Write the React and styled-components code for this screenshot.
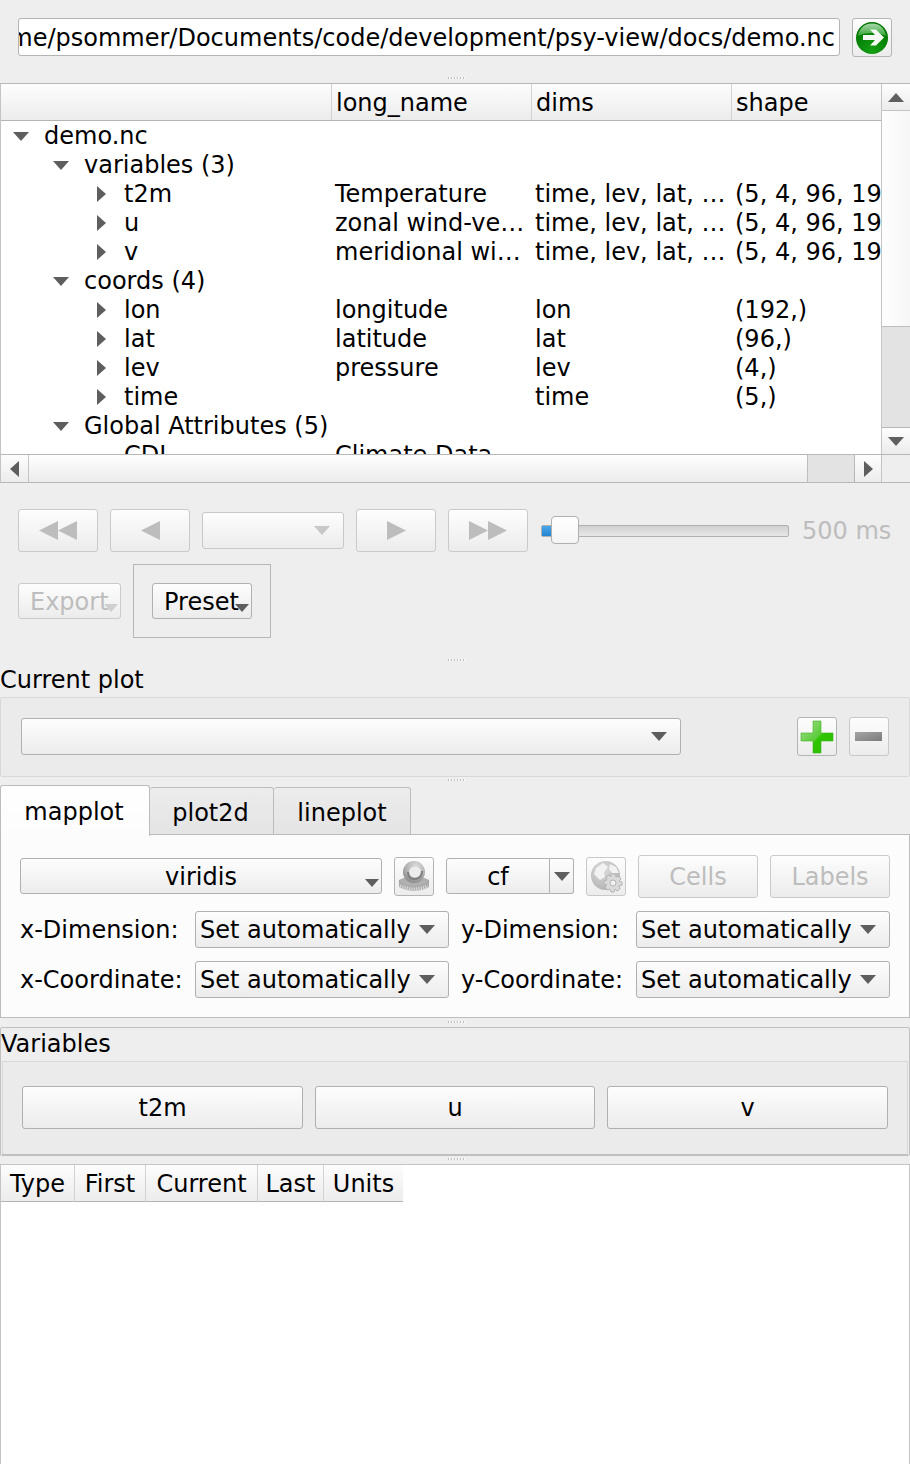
import React from 'react';
import styled, { createGlobalStyle } from 'styled-components';

const Global = createGlobalStyle`
  html, body { margin: 0; padding: 0; background: #eeeeee; }
  body { font-family: "DejaVu Sans", "Liberation Sans", sans-serif; font-size: 24px; color: #000; }
  * { box-sizing: border-box; }
`;

const Window = styled.div`
  width: 910px;
  height: 1464px;
  overflow: hidden;
  background: #eeeeee;
`;

const gradient = 'linear-gradient(#fdfdfd, #ececec)';

const TopBar = styled.div`
  display: flex;
  gap: 12px;
  padding: 18px 18px 0;
  height: 72px;
`;

const PathInput = styled.div`
  width: 822px;
  height: 38px;
  background: #fff;
  border: 1px solid #b4b4b4;
  border-radius: 3px;
  padding: 2px 4px 0;
  display: flex;
  justify-content: flex-end;
  align-items: center;
  overflow: hidden;
  white-space: nowrap;
  line-height: 34px;
`;

const IconButton = styled.div`
  width: 40px;
  height: 39px;
  border: 1px solid ${p => (p.$disabled ? '#c8c8c8' : '#b4b4b4')};
  border-radius: 3px;
  background: ${gradient};
  display: flex;
  align-items: center;
  justify-content: center;
  flex: none;
`;

const Handle = styled.div`
  height: ${p => p.$h}px;
  padding: ${p => p.$top}px 0 0 2px;
  display: flex;
  align-items: flex-start;
  justify-content: center;
  &::before {
    content: '';
    width: 17px;
    height: 2px;
    background: repeating-linear-gradient(90deg, #c0c0c0 0 1px, #fafafa 1px 2px, transparent 2px 3px);
  }
`;

const TreeFrame = styled.div`
  height: 400px;
  border: 1px solid #b8b8b8;
  border-left-color: #c4c4c4;
  border-right: none;
  display: grid;
  grid-template-columns: 880px 29px;
  grid-template-rows: 370px 28px;
  background: #fff;
`;

const TreeMain = styled.div`
  overflow: hidden;
  display: flex;
  flex-direction: column;
`;

const TreeHeader = styled.div`
  display: flex;
  height: 37px;
  flex: none;
  background: ${gradient};
  border-bottom: 1px solid #b4b4b4;
`;

const HeaderCell = styled.div`
  width: ${p => p.$w}px;
  flex: none;
  border-left: ${p => (p.$first ? 'none' : '1px solid #d2d2d2')};
  padding-left: 4px;
  line-height: 39px;
  white-space: nowrap;
`;

const TreeBody = styled.div`
  flex: 1;
  overflow: hidden;
`;

const TreeRow = styled.div`
  display: grid;
  grid-template-columns: 330px 200px 200px 150px;
  height: 29px;
  line-height: 29px;
  white-space: nowrap;
`;

const NameCell = styled.div`
  display: flex;
  align-items: center;
  padding-left: ${p => p.$level * 40}px;
  white-space: nowrap;
`;

const NameText = styled.span`
  padding-top: 1px;
`;

const ArrowSlot = styled.span`
  width: 43px;
  flex: none;
  display: flex;
  align-items: center;
  padding-left: ${p => (p.$open ? 12 : 16)}px;
`;

const DataCell = styled.div`
  padding: 1px 0 0 4px;
  overflow: hidden;
`;

const VBar = styled.div`
  border-left: 1px solid #c4c4c4;
  display: flex;
  flex-direction: column;
  height: 370px;
  background: #fff;
`;

const BarButton = styled.div`
  height: ${p => p.$h}px;
  flex: none;
  background: ${gradient};
  display: flex;
  align-items: center;
  justify-content: center;
  ${p => (p.$top ? 'border-bottom: 1px solid #c4c4c4;' : '')}
  ${p => (p.$bottom ? 'border-top: 1px solid #b8b8b8;' : '')}
`;

const BarPage = styled.div`
  height: ${p => p.$h}px;
  flex: none;
  background: linear-gradient(90deg, #fefefe, #f6f6f6);
`;

const BarGroove = styled.div`
  flex: 1;
  background: #e3e3e3;
  border-top: 1px solid #bdbdbd;
`;

const HBar = styled.div`
  border-top: 1px solid #b8b8b8;
  display: flex;
  height: 28px;
`;

const HBarButton = styled.div`
  width: ${p => p.$w}px;
  flex: none;
  background: ${gradient};
  display: flex;
  align-items: center;
  justify-content: center;
  ${p => (p.$left ? 'border-right: 1px solid #c4c4c4;' : '')}
  ${p => (p.$right ? 'border-left: 1px solid #b8b8b8;' : '')}
`;

const HBarPage = styled.div`
  width: ${p => p.$w}px;
  flex: none;
  background: linear-gradient(#fefefe, #ececec);
`;

const HBarGroove = styled.div`
  flex: 1;
  background: #e3e3e3;
  border-left: 1px solid #bdbdbd;
`;

const Corner = styled.div`
  background: #eeeeee;
  border-top: 1px solid #b8b8b8;
  border-left: 1px solid #c4c4c4;
`;

const Controls = styled.div`
  height: 170px;
  padding: 26px 18px 0;
`;

const PlayRow = styled.div`
  display: flex;
  align-items: center;
  gap: 12px;
  height: 43px;
`;

const PlayButton = styled.div`
  width: 80px;
  height: 43px;
  flex: none;
  border: 1px solid #cacaca;
  border-radius: 3px;
  background: ${gradient};
  display: flex;
  align-items: center;
  justify-content: center;
`;

const FrameCombo = styled.div`
  width: 142px;
  height: 37px;
  flex: none;
  border: 1px solid #c8c8c8;
  border-radius: 3px;
  background: ${gradient};
  display: flex;
  align-items: center;
  justify-content: flex-end;
  padding-right: 13px;
`;

const Slider = styled.div`
  position: relative;
  width: 248px;
  height: 12px;
  flex: none;
  margin-left: 1px;
  border: 1px solid #b0b0b0;
  border-radius: 2px;
  background: linear-gradient(#d0d0d0, #e8e8e8);
`;

const SliderFill = styled.div`
  position: absolute;
  left: 0;
  top: 0;
  bottom: 0;
  width: 14px;
  background: linear-gradient(#4aa6ea, #2283d0);
`;

const SliderKnob = styled.div`
  position: absolute;
  left: 9px;
  top: -10px;
  width: 28px;
  height: 28px;
  border: 1px solid #b0b0b0;
  border-radius: 4px;
  background: linear-gradient(#ffffff, #f4f4f4);
`;

const Interval = styled.div`
  color: #bdbdbd;
  margin-left: 1px;
  white-space: nowrap;
`;

const ExportRow = styled.div`
  display: flex;
  align-items: flex-start;
  gap: 12px;
  margin-top: 12px;
`;

const MenuButton = styled.div`
  position: relative;
  width: ${p => p.$w}px;
  height: 36px;
  margin-top: ${p => p.$top || 0}px;
  border: 1px solid ${p => (p.$disabled ? '#cacaca' : '#b0b0b0')};
  border-radius: 3px;
  background: ${gradient};
  color: ${p => (p.$disabled ? '#bdbdbd' : '#000')};
  line-height: 37px;
  padding-left: 11px;
  white-space: nowrap;
  flex: none;
`;

const MenuArrow = styled.span`
  position: absolute;
  right: 2px;
  bottom: 6px;
  display: flex;
`;

const PresetBox = styled.div`
  width: 138px;
  height: 74px;
  border: 1px solid #b8b8b8;
  padding: 18px;
`;

const SectionLabel = styled.div`
  height: 32px;
  line-height: 30px;
  white-space: nowrap;
`;

const PlotGroup = styled.div`
  height: 80px;
  border: 1px solid #d8d8d8;
  border-radius: 2px;
  background: #ebebeb;
  padding: 20px 20px 0;
  display: flex;
  align-items: flex-start;
`;

const PlotCombo = styled.div`
  width: 660px;
  height: 37px;
  flex: none;
  border: 1px solid #b0b0b0;
  border-radius: 3px;
  background: ${gradient};
  display: flex;
  align-items: center;
  justify-content: flex-end;
  padding-right: 13px;
`;

const PlotButtons = styled.div`
  display: flex;
  gap: 12px;
  margin-left: 116px;
  margin-top: -1px;
`;

const TabBar = styled.div`
  display: flex;
  align-items: flex-end;
  height: 50px;
  position: relative;
  z-index: 1;
`;

const Tab = styled.div`
  width: ${p => p.$w}px;
  height: ${p => (p.$active ? 51 : 48)}px;
  margin-bottom: ${p => (p.$active ? -1 : 0)}px;
  border: 1px solid #bcbcbc;
  border-left-width: ${p => (p.$active || p.$first ? 1 : 0)}px;
  border-bottom: ${p => (p.$active ? 'none' : '1px solid #bcbcbc')};
  border-radius: 3px 3px 0 0;
  background: ${p => (p.$active ? 'linear-gradient(#ffffff, #fcfcfc)' : 'linear-gradient(#ececec, #e4e4e4)')};
  text-align: center;
  line-height: ${p => (p.$active ? 52 : 50)}px;
  padding-right: ${p => p.$pad || 0}px;
`;

const TabPane = styled.div`
  height: 184px;
  margin-top: -1px;
  border: 1px solid #bcbcbc;
  background: #fcfcfc;
  padding: 20px 19px 0;
`;

const FormatRow = styled.div`
  display: flex;
  align-items: flex-start;
  height: 43px;
`;

const FormatCombo = styled.div`
  position: relative;
  width: ${p => p.$w}px;
  height: 36px;
  flex: none;
  margin: 3px 0 0 ${p => p.$gap || 0}px;
  border: 1px solid #b0b0b0;
  border-radius: ${p => p.$radius || '3px'};
  background: ${gradient};
  line-height: 36px;
  text-align: center;
`;

const ComboDrop = styled.div`
  width: 24px;
  height: 36px;
  flex: none;
  margin-top: 3px;
  border: 1px solid #b0b0b0;
  border-left: none;
  border-radius: 0 3px 3px 0;
  background: ${gradient};
  display: flex;
  align-items: center;
  justify-content: center;
`;

const SmallButton = styled(IconButton)`
  margin: 2px 0 0 ${p => p.$gap}px;
`;

const TextButton = styled.div`
  width: 120px;
  height: 43px;
  margin-left: 12px;
  border: 1px solid #cacaca;
  border-radius: 3px;
  background: ${gradient};
  color: #bdbdbd;
  line-height: 43px;
  text-align: center;
  flex: none;
`;

const AxisGrid = styled.div`
  display: grid;
  grid-template-columns: 175px 254px 187px 254px;
  row-gap: 12px;
  margin-top: 13px;
`;

const AxisLabel = styled.div`
  line-height: 38px;
  white-space: nowrap;
  padding-left: ${p => (p.$right ? 12 : 0)}px;
`;

const AxisCombo = styled.div`
  height: 37px;
  border: 1px solid #b0b0b0;
  border-radius: 3px;
  background: ${gradient};
  line-height: 36px;
  padding: 0 13px 0 4px;
  display: flex;
  justify-content: space-between;
  align-items: center;
  white-space: nowrap;
`;

const VarGroup = styled.div`
  height: 129px;
  border: 1px solid #c0c0c0;
  border-radius: 2px;
  padding: 1px 0 0;
`;

const VarTitle = styled.div`
  height: 32px;
  line-height: 31px;
`;

const VarInner = styled.div`
  height: 94px;
  margin: 0 1px;
  border: 1px solid #d8d8d8;
  border-bottom-color: #c0c0c0;
  background: #ebebeb;
  padding: 24px 18px 0 19px;
  display: grid;
  grid-template-columns: 281px 280px 281px;
  gap: 12px;
`;

const VarButton = styled.div`
  height: 43px;
  border: 1px solid #b0b0b0;
  border-radius: 3px;
  background: ${gradient};
  line-height: 43px;
  text-align: center;
`;

const TableFrame = styled.div`
  height: 300px;
  border: 1px solid #c4c4c4;
  border-bottom: none;
  background: #fff;
`;

const TableHeader = styled.div`
  display: flex;
  height: 37px;
`;

const TableHead = styled.div`
  width: ${p => p.$w}px;
  flex: none;
  background: ${gradient};
  border-bottom: 1px solid #b4b4b4;
  border-right: ${p => (p.$last ? 'none' : '1px solid #d2d2d2')};
  line-height: 38px;
  text-align: center;
`;

const Triangle = ({ dir, size = 16, color = '#5e5e5e' }) => {
  const pts = {
    down: '0,0 16,0 8,9',
    up: '0,9 16,9 8,0',
    right: '0,0 9,8 0,16',
    left: '9,0 0,8 9,16',
  }[dir];
  const vertical = dir === 'down' || dir === 'up';
  const w = vertical ? size : (size * 9) / 16;
  const h = vertical ? (size * 9) / 16 : size;
  return (
    <svg width={w} height={h} viewBox={vertical ? '0 0 16 9' : '0 0 9 16'} style={{ display: 'block' }}>
      <polygon points={pts} fill={color} />
    </svg>
  );
};

// media buttons use a wider glyph than the tree arrows
const MediaIcon = ({ dir, count = 1 }) => (
  <svg width={count * 19} height="19" viewBox={`0 0 ${count * 19} 19`} style={{ display: 'block' }}>
    {Array.from({ length: count }, (_, i) => (
      <polygon
        key={i}
        points={dir === 'left' ? '19,0 0,9.5 19,19' : '0,0 19,9.5 0,19'}
        transform={`translate(${i * 19} 0)`}
        fill="#bdbdbd"
      />
    ))}
  </svg>
);

const GoIcon = () => (
  <svg width="34" height="34" viewBox="0 0 34 34">
    <defs>
      <radialGradient id="goFill" cx="50%" cy="90%" r="75%">
        <stop offset="0" stopColor="#14a014" />
        <stop offset="1" stopColor="#007400" />
      </radialGradient>
      <linearGradient id="goShine" x1="0" y1="0" x2="0" y2="1">
        <stop offset="0" stopColor="#c8e8c8" />
        <stop offset="1" stopColor="#3fae3f" />
      </linearGradient>
    </defs>
    <circle cx="17" cy="17" r="16" fill="url(#goFill)" />
    <path d="M3 15 C4 7 10 2.5 17 2.5 S30 7 31 15 C25 11 9 11 3 15Z" fill="url(#goShine)" opacity="0.85" />
    <path d="M8 14 H20 L15 8.5 H21 L29 16.5 L21 24.5 H15 L20 19 H8Z" fill="#f4f9f4" />
  </svg>
);

const PlusIcon = () => (
  <svg width="34" height="34" viewBox="0 0 34 34">
    <defs>
      <linearGradient id="plusFill" x1="0" y1="0" x2="1" y2="1">
        <stop offset="0" stopColor="#a6dc96" />
        <stop offset="0.5" stopColor="#5ccc3a" />
        <stop offset="0.55" stopColor="#2fc400" />
        <stop offset="1" stopColor="#2cbc00" />
      </linearGradient>
    </defs>
    <path d="M13 1 H21 V13 H33 V21 H21 V33 H13 V21 H1 V13 H13Z" fill="url(#plusFill)" stroke="#3cb41e" strokeWidth="0.6" />
  </svg>
);

const MinusIcon = () => (
  <svg width="28" height="10" viewBox="0 0 28 10">
    <defs>
      <linearGradient id="minusFill" x1="0" y1="0" x2="1" y2="1">
        <stop offset="0" stopColor="#a4a4a4" />
        <stop offset="1" stopColor="#7c7c7c" />
      </linearGradient>
    </defs>
    <rect x="0" y="0" width="27" height="9" fill="url(#minusFill)" />
  </svg>
);

const PaletteIcon = () => (
  <svg width="32" height="32" viewBox="0 0 32 32">
    <defs>
      <radialGradient id="ball" cx="60%" cy="25%" r="75%">
        <stop offset="0" stopColor="#dcdcdc" />
        <stop offset="0.6" stopColor="#b4b4b4" />
        <stop offset="1" stopColor="#8c8c8c" />
      </radialGradient>
      <linearGradient id="base" x1="0" y1="0" x2="0" y2="1">
        <stop offset="0" stopColor="#9a9a9a" />
        <stop offset="1" stopColor="#b4b4b4" />
      </linearGradient>
    </defs>
    <path d="M1 19 V26 Q16 34 31 26 V19 Q16 12 1 19Z" fill="url(#base)" />
    <path d="M2 25 Q16 32 30 25" fill="none" stroke="#dedede" strokeWidth="4" strokeDasharray="1 1.4" />
    <ellipse cx="16" cy="20" rx="14" ry="4.5" fill="#b0b0b0" />
    <circle cx="16" cy="11" r="11" fill="url(#ball)" />
    <ellipse cx="17" cy="11" rx="6" ry="5.5" fill="#ececec" />
    <path d="M10 11 Q10 19 18 18 Q24 16.5 24 10" fill="none" stroke="#7f7f7f" strokeWidth="2" />
  </svg>
);

const GlobeIcon = () => (
  <svg width="33" height="33" viewBox="0 0 33 33">
    <defs>
      <radialGradient id="globe" cx="40%" cy="30%" r="75%">
        <stop offset="0" stopColor="#dcdcdc" />
        <stop offset="1" stopColor="#b2b2b2" />
      </radialGradient>
    </defs>
    <circle cx="15.5" cy="15.5" r="14.5" fill="url(#globe)" />
    <path d="M6 8 L13 3 L18 7 L14 12 L15 17 L10 20 L4 14Z" fill="#f2f2f2" />
    <path d="M20 4 L26 7 L29 13 L22 13 L19 9Z" fill="#f2f2f2" />
    <g transform="translate(23 23)" fill="#dadada" stroke="#b4b4b4" strokeWidth="1">
      <path d="M-2 -9 H2 L3 -6 L6 -7 L8 -4 L6 -2 L9 -1 V2 L6 3 L7 6 L4 8 L2 6 L1 9 H-2 L-3 6 L-6 7 L-8 4 L-6 2 L-9 1 V-2 L-6 -3 L-7 -6 L-4 -8 L-2 -6Z" />
      <circle r="3" fill="#f0f0f0" />
    </g>
  </svg>
);

const treeRows = [
  { level: 0, open: true, name: 'demo.nc' },
  { level: 1, open: true, name: 'variables (3)' },
  { level: 2, name: 't2m', long: 'Temperature', dims: 'time, lev, lat, …', shape: '(5, 4, 96, 192)' },
  { level: 2, name: 'u', long: 'zonal wind-ve…', dims: 'time, lev, lat, …', shape: '(5, 4, 96, 192)' },
  { level: 2, name: 'v', long: 'meridional wi…', dims: 'time, lev, lat, …', shape: '(5, 4, 96, 192)' },
  { level: 1, open: true, name: 'coords (4)' },
  { level: 2, name: 'lon', long: 'longitude', dims: 'lon', shape: '(192,)' },
  { level: 2, name: 'lat', long: 'latitude', dims: 'lat', shape: '(96,)' },
  { level: 2, name: 'lev', long: 'pressure', dims: 'lev', shape: '(4,)' },
  { level: 2, name: 'time', dims: 'time', shape: '(5,)' },
  { level: 1, open: true, name: 'Global Attributes (5)' },
  { level: 2, leaf: true, name: 'CDI', long: 'Climate Data' },
];

export default function App() {
  return (
    <Window>
      <Global />
      <TopBar>
        <PathInput>/home/psommer/Documents/code/development/psy-view/docs/demo.nc</PathInput>
        <IconButton><GoIcon /></IconButton>
      </TopBar>
      <Handle $h={11} $top={5} />

      <TreeFrame>
        <TreeMain>
          <TreeHeader>
            <HeaderCell $first $w={330} />
            <HeaderCell $w={200}>long_name</HeaderCell>
            <HeaderCell $w={200}>dims</HeaderCell>
            <HeaderCell $w={150}>shape</HeaderCell>
          </TreeHeader>
          <TreeBody>
            {treeRows.map(r => (
              <TreeRow key={r.name}>
                <NameCell $level={r.level}>
                  <ArrowSlot $open={r.open}>
                    {!r.leaf && <Triangle dir={r.open ? 'down' : 'right'} />}
                  </ArrowSlot>
                  <NameText>{r.name}</NameText>
                </NameCell>
                <DataCell>{r.long}</DataCell>
                <DataCell>{r.dims}</DataCell>
                <DataCell>{r.shape}</DataCell>
              </TreeRow>
            ))}
          </TreeBody>
        </TreeMain>
        <VBar>
          <BarButton $h={27} $top><Triangle dir="up" /></BarButton>
          <BarPage $h={215} />
          <BarGroove />
          <BarButton $h={27} $bottom><Triangle dir="down" /></BarButton>
        </VBar>
        <HBar>
          <HBarButton $w={28} $left><Triangle dir="left" /></HBarButton>
          <HBarPage $w={778} />
          <HBarGroove />
          <HBarButton $w={27} $right><Triangle dir="right" /></HBarButton>
        </HBar>
        <Corner />
      </TreeFrame>

      <Controls>
        <PlayRow>
          <PlayButton><MediaIcon dir="left" count={2} /></PlayButton>
          <PlayButton><MediaIcon dir="left" /></PlayButton>
          <FrameCombo><Triangle dir="down" color="#c8c8c8" /></FrameCombo>
          <PlayButton><MediaIcon dir="right" /></PlayButton>
          <PlayButton><MediaIcon dir="right" count={2} /></PlayButton>
          <Slider>
            <SliderFill />
            <SliderKnob />
          </Slider>
          <Interval>500 ms</Interval>
        </PlayRow>
        <ExportRow>
          <MenuButton $disabled $w={103} $top={19}>
            Export
            <MenuArrow><Triangle dir="down" size={14} color="#cfcfcf" /></MenuArrow>
          </MenuButton>
          <PresetBox>
            <MenuButton $w={100}>
              Preset
              <MenuArrow><Triangle dir="down" size={14} /></MenuArrow>
            </MenuButton>
          </PresetBox>
        </ExportRow>
      </Controls>
      <Handle $h={12} $top={6} />

      <SectionLabel>Current plot</SectionLabel>
      <PlotGroup>
        <PlotCombo><Triangle dir="down" /></PlotCombo>
        <PlotButtons>
          <IconButton><PlusIcon /></IconButton>
          <IconButton $disabled><MinusIcon /></IconButton>
        </PlotButtons>
      </PlotGroup>
      <Handle $h={8} $top={2} />

      <TabBar>
        <Tab $active $first $w={150} $pad={2}>mapplot</Tab>
        <Tab $w={124} $pad={2}>plot2d</Tab>
        <Tab $w={137}>lineplot</Tab>
      </TabBar>
      <TabPane>
        <FormatRow>
          <FormatCombo $w={362}>
            viridis
            <MenuArrow><Triangle dir="down" size={14} /></MenuArrow>
          </FormatCombo>
          <SmallButton $gap={12}><PaletteIcon /></SmallButton>
          <FormatCombo $w={104} $gap={12} $radius="3px 0 0 3px">cf</FormatCombo>
          <ComboDrop><Triangle dir="down" /></ComboDrop>
          <SmallButton $gap={12} $disabled><GlobeIcon /></SmallButton>
          <TextButton>Cells</TextButton>
          <TextButton>Labels</TextButton>
        </FormatRow>
        <AxisGrid>
          <AxisLabel>x-Dimension:</AxisLabel>
          <AxisCombo>Set automatically<Triangle dir="down" /></AxisCombo>
          <AxisLabel $right>y-Dimension:</AxisLabel>
          <AxisCombo>Set automatically<Triangle dir="down" /></AxisCombo>
          <AxisLabel>x-Coordinate:</AxisLabel>
          <AxisCombo>Set automatically<Triangle dir="down" /></AxisCombo>
          <AxisLabel $right>y-Coordinate:</AxisLabel>
          <AxisCombo>Set automatically<Triangle dir="down" /></AxisCombo>
        </AxisGrid>
      </TabPane>
      <Handle $h={9} $top={3} />

      <VarGroup>
        <VarTitle>Variables</VarTitle>
        <VarInner>
          <VarButton>t2m</VarButton>
          <VarButton>u</VarButton>
          <VarButton>v</VarButton>
        </VarInner>
      </VarGroup>
      <Handle $h={8} $top={2} />

      <TableFrame>
        <TableHeader>
          <TableHead $w={74}>Type</TableHead>
          <TableHead $w={71}>First</TableHead>
          <TableHead $w={112}>Current</TableHead>
          <TableHead $w={66}>Last</TableHead>
          <TableHead $w={79} $last>Units</TableHead>
        </TableHeader>
      </TableFrame>
    </Window>
  );
}
